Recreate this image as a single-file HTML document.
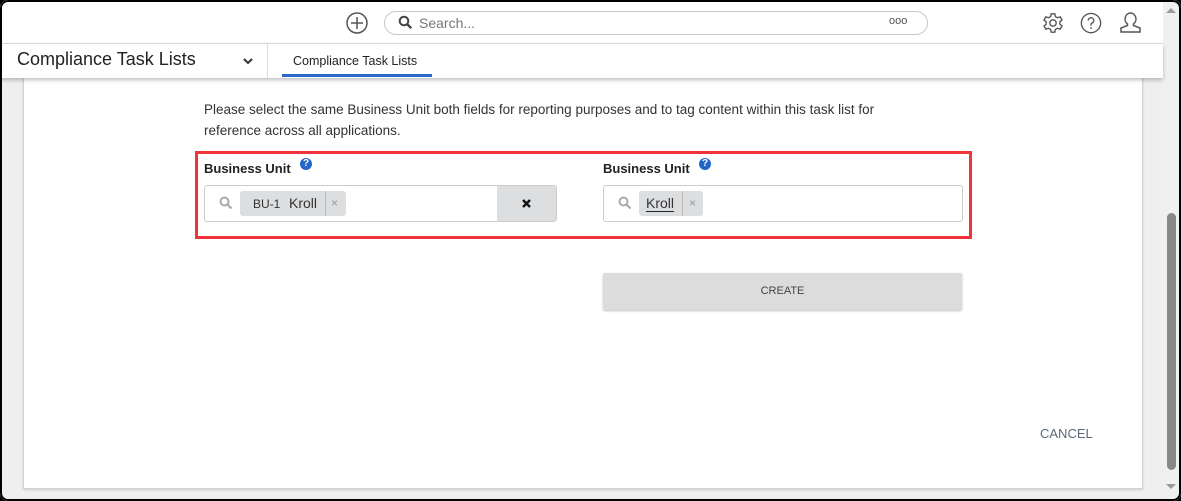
<!DOCTYPE html>
<html><head><style>
*{box-sizing:border-box;margin:0;padding:0}
html,body{width:1181px;height:501px;overflow:hidden;background:#000;font-family:"Liberation Sans",sans-serif}
#win{position:absolute;left:0;top:0;width:1181px;height:501px;background:#efefef;border-radius:8px;overflow:hidden}
#frame{position:absolute;left:0;top:0;width:1181px;height:501px;border-radius:8px;box-shadow:inset 0 0 0 2px #000;z-index:10;pointer-events:none}
#top{position:absolute;left:0;top:0;width:1163px;height:44px;background:#fff;border-bottom:1px solid #ddd}
#nav{position:absolute;left:0;top:44px;width:1163px;height:34px;background:#fff;box-shadow:0 2px 4px rgba(0,0,0,.25);z-index:2}
#card{position:absolute;left:23px;top:60px;width:1120px;height:429px;background:#fff;border:1px solid #d4d4d4;box-shadow:0 1px 2px rgba(0,0,0,.15)}
.abs{position:absolute}
#sb{position:absolute;left:1163px;top:0;width:18px;height:501px;background:#f0f0f0}
</style></head><body><div id="win">
<div id="top">
 <svg class="abs" style="left:345px;top:11px" width="24" height="24" viewBox="0 0 24 24"><circle cx="12" cy="12" r="10" fill="none" stroke="#555" stroke-width="1.5"/><path d="M12 6v12M6 12h12" stroke="#555" stroke-width="1.5"/></svg>
 <div class="abs" style="left:384px;top:11px;width:544px;height:24px;border:1px solid #c8c8c8;border-radius:12px"></div>
 <svg class="abs" style="left:398px;top:15px" width="15" height="15" viewBox="0 0 15 15"><circle cx="6" cy="6" r="4.3" fill="none" stroke="#444" stroke-width="2"/><path d="M9.2 9.2l4 4" stroke="#444" stroke-width="2.4"/></svg>
 <div class="abs" style="left:419px;top:15px;font-size:14px;color:#777">Search...</div>
 <div class="abs" style="left:889px;top:15px;font-size:11px;color:#555;letter-spacing:0px">ooo</div>
 <svg class="abs" style="left:1042px;top:12px" width="22" height="22" viewBox="0 0 24 24"><path fill="none" stroke="#555" stroke-width="1.5" d="M10 2h4l.6 3 2.3 1.3 2.9-1 2 3.4-2.3 2v2.6l2.3 2-2 3.4-2.9-1-2.3 1.3-.6 3h-4l-.6-3-2.3-1.3-2.9 1-2-3.4 2.3-2v-2.6l-2.3-2 2-3.4 2.9 1L9.4 5z"/><circle cx="12" cy="12" r="3.5" fill="none" stroke="#555" stroke-width="1.5"/></svg>
 <svg class="abs" style="left:1080px;top:12px" width="22" height="22" viewBox="0 0 24 24"><circle cx="12" cy="12" r="10.5" fill="none" stroke="#555" stroke-width="1.5"/><path d="M9 9.3a3 3 0 1 1 4.2 2.7c-.8.4-1.2 1-1.2 2v.8" fill="none" stroke="#555" stroke-width="1.5"/><circle cx="12" cy="17.5" r="1" fill="#555"/></svg>
 <svg class="abs" style="left:1119px;top:11px" width="23" height="24" viewBox="0 0 23 24"><path d="M11.5 2a5.5 6 0 0 0-3 11v1.5L2 17v4h19v-4l-6.5-2.5V13a5.5 6 0 0 0-3-11z" fill="none" stroke="#555" stroke-width="1.5"/></svg>
</div>
<div id="nav">
 <div class="abs" style="left:17px;top:5px;font-size:18px;color:#222">Compliance Task Lists</div>
 <svg class="abs" style="left:242px;top:13px" width="12" height="8" viewBox="0 0 12 8"><path d="M2 2l4 4 4-4" fill="none" stroke="#333" stroke-width="2"/></svg>
 <div class="abs" style="left:267px;top:0;width:1px;height:34px;background:#ddd"></div>
 <div class="abs" style="left:293px;top:10px;font-size:12.5px;color:#222">Compliance Task Lists</div>
 <div class="abs" style="left:282px;top:30px;width:150px;height:3px;background:#2a6acb"></div>
</div>
<div id="card"></div>
<div class="abs" style="left:204px;top:99px;font-size:13.5px;color:#333;line-height:21px;width:720px">Please select the same Business Unit both fields for reporting purposes and to tag content within this task list for reference across all applications.</div>
<div class="abs" style="left:195px;top:151px;width:777px;height:88px;border:3px solid #f0343b"></div>
<div class="abs" style="left:204px;top:161px;font-size:13px;font-weight:bold;color:#222">Business Unit</div>
<div class="abs" style="left:300px;top:158px;width:12px;height:12px;border-radius:50%;background:#2466c7;color:#fff;font-size:10px;font-weight:bold;text-align:center;line-height:12px">?</div>
<div class="abs" style="left:204px;top:185px;width:353px;height:37px;border:1px solid #ccc;border-radius:3px;overflow:hidden"><div class="abs" style="left:292px;top:0;width:61px;height:37px;background:#dcdee0"></div></div>
<svg class="abs" style="left:219px;top:196px" width="14" height="14" viewBox="0 0 14 14"><circle cx="5.5" cy="5.5" r="4" fill="none" stroke="#aaa" stroke-width="2"/><path d="M8.5 8.5l4 4" stroke="#aaa" stroke-width="2.2"/></svg>
<div class="abs" style="left:240px;top:191px;width:106px;height:25px;background:#dcdee0;border-radius:3px"></div>
<div class="abs" style="left:325px;top:191px;width:1px;height:25px;background:#bbb"></div>
<div class="abs" style="left:253px;top:197px;font-size:12px;color:#333">BU-1</div>
<div class="abs" style="left:289px;top:195px;font-size:14px;color:#333">Kroll</div>
<div class="abs" style="left:331px;top:196px;font-size:12px;color:#999">×</div>
<svg class="abs" style="left:522px;top:199px" width="9" height="9" viewBox="0 0 9 9"><path d="M1 1l7 7M8 1l-7 7" stroke="#111" stroke-width="2.4"/></svg>
<div class="abs" style="left:603px;top:161px;font-size:13px;font-weight:bold;color:#222">Business Unit</div>
<div class="abs" style="left:699px;top:158px;width:12px;height:12px;border-radius:50%;background:#2466c7;color:#fff;font-size:10px;font-weight:bold;text-align:center;line-height:12px">?</div>
<div class="abs" style="left:603px;top:185px;width:360px;height:37px;border:1px solid #ccc;border-radius:3px"></div>
<svg class="abs" style="left:618px;top:196px" width="14" height="14" viewBox="0 0 14 14"><circle cx="5.5" cy="5.5" r="4" fill="none" stroke="#aaa" stroke-width="2"/><path d="M8.5 8.5l4 4" stroke="#aaa" stroke-width="2.2"/></svg>
<div class="abs" style="left:639px;top:191px;width:64px;height:25px;background:#dcdee0;border-radius:3px"></div>
<div class="abs" style="left:682px;top:191px;width:1px;height:25px;background:#bbb"></div>
<div class="abs" style="left:646px;top:195px;font-size:14px;color:#333;border-bottom:1px solid #222;line-height:16px">Kroll</div>
<div class="abs" style="left:689px;top:196px;font-size:12px;color:#999">×</div>
<div class="abs" style="left:603px;top:273px;width:359px;height:37px;background:#dcdcdc;border-radius:2px;box-shadow:0 1px 2px rgba(0,0,0,.25);font-size:11px;color:#444;text-align:center;line-height:37px">CREATE</div>
<div class="abs" style="left:1040px;top:426px;font-size:13px;color:#5a6a7a">CANCEL</div>
<div id="sb">
 <div class="abs" style="left:3px;top:8px;width:0;height:0;border-left:5px solid transparent;border-right:5px solid transparent;border-bottom:5px solid #999"></div>
 <div class="abs" style="left:4px;top:213px;width:9px;height:257px;background:#888;border-radius:5px"></div>
 <div class="abs" style="left:3px;top:484px;width:0;height:0;border-left:5px solid transparent;border-right:5px solid transparent;border-top:5px solid #999"></div>
</div>
<div id="frame"></div>
</div></body></html>
